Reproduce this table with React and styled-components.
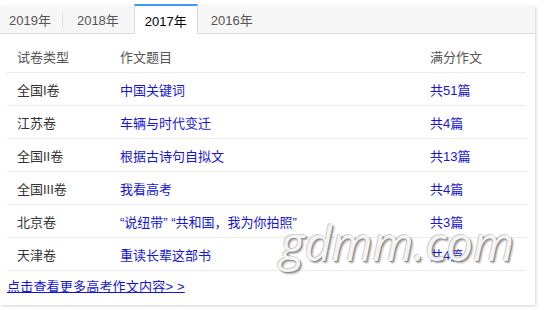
import React from "react";
import styled, { createGlobalStyle } from "styled-components";

const Global = createGlobalStyle`
  html, body { margin: 0; padding: 0; background: #fff; }
  body { font-family: "Liberation Sans", "Noto Sans CJK SC", sans-serif; }
`;

const Page = styled.div`
  padding-top: 6px;
  width: 553px;
  height: 310px;
  box-sizing: border-box;
  overflow: hidden;
`;

const Panel = styled.div`
  position: relative;
  width: 535px;
  height: 299px;
  background: #fff;
  box-shadow: 1px 1px 3px rgba(0, 0, 0, 0.18);
  box-sizing: border-box;
  display: flex;
  flex-direction: column;
`;

const TabBar = styled.div`
  display: flex;
  align-items: stretch;
  height: 27px;
  background: #f7f7f7;
  border-bottom: 1px solid #dcdcdc;
`;

const Tab = styled.div`
  position: relative;
  display: flex;
  align-items: center;
  padding-left: ${(p) => (p.$first ? "8px" : p.$active ? "10px" : "12px")};
  padding-right: ${(p) => (p.$active ? "10px" : "12px")};
  margin-left: ${(p) => (p.$active ? "2px" : "0")};
  font-size: 13px;
  color: ${(p) => (p.$active ? "#000" : "#555")};
  background: ${(p) => (p.$active ? "#fff" : "transparent")};
  border-top: 2px solid ${(p) => (p.$active ? "#3b99fc" : "transparent")};
  border-left: 1px solid ${(p) => (p.$active ? "#dcdcdc" : "transparent")};
  border-right: 1px solid ${(p) => (p.$active ? "#dcdcdc" : "transparent")};
  margin-bottom: ${(p) => (p.$active ? "-1px" : "0")};
  margin-top: -2px;
  box-sizing: border-box;
  ${(p) =>
    p.$sep &&
    `
    &::after {
      content: "";
      position: absolute;
      right: 0;
      top: 8px;
      height: 14px;
      width: 1px;
      background: #ddd;
    }
  `}
`;

const Table = styled.div`
  margin: 6px 9px 0 7px;
`;

const Row = styled.div`
  display: grid;
  grid-template-columns: 103px 310px 1fr;
  height: 32px;
  align-items: center;
  border-bottom: 1px solid #ececec;
  font-size: 13px;
`;

const Cell = styled.div`
  padding-left: 10px;
  white-space: nowrap;
  color: ${(p) => (p.$link ? "#1515d8" : p.$head ? "#555" : "#333")};
`;

const More = styled.a`
  display: block;
  margin: 7px 0 0 7px;
  font-size: 13px;
  color: #1515d8;
  text-decoration: underline;
  line-height: 18px;
  letter-spacing: 0.2px;
`;

const Watermark = styled.div`
  position: absolute;
  left: 280px;
  top: 214px;
  font-family: "Open Sans", "DejaVu Sans", sans-serif;
  font-style: italic;
  font-weight: 400;
  font-size: 47px;
  line-height: 1;
  color: #f4f4f4;
  text-shadow: 1px 1px 0 #8f8f8f, 2px 2px 2px rgba(0, 0, 0, 0.35), -1px -1px 0 #d0d0d0;
  pointer-events: none;
  white-space: nowrap;
`;

const rows = [
  ["全国I卷", "中国关键词", "共51篇"],
  ["江苏卷", "车辆与时代变迁", "共4篇"],
  ["全国II卷", "根据古诗句自拟文", "共13篇"],
  ["全国III卷", "我看高考", "共4篇"],
  ["北京卷", "\u201c说纽带\u201d \u201c共和国，我为你拍照\u201d", "共3篇"],
  ["天津卷", "重读长辈这部书", "共4篇"],
];

export default function App() {
  return (
    <>
      <Global />
      <Page>
        <Panel>
          <TabBar>
            <Tab $first $sep>2019年</Tab>
            <Tab>2018年</Tab>
            <Tab $active>2017年</Tab>
            <Tab>2016年</Tab>
          </TabBar>
          <Table>
            <Row>
              <Cell $head>试卷类型</Cell>
              <Cell $head>作文题目</Cell>
              <Cell $head>满分作文</Cell>
            </Row>
            {rows.map((r) => (
              <Row key={r[0]}>
                <Cell>{r[0]}</Cell>
                <Cell $link>{r[1]}</Cell>
                <Cell $link>{r[2]}</Cell>
              </Row>
            ))}
          </Table>
          <More href="#">点击查看更多高考作文内容&gt; &gt;</More>
          <Watermark>gdmm.com</Watermark>
        </Panel>
      </Page>
    </>
  );
}
